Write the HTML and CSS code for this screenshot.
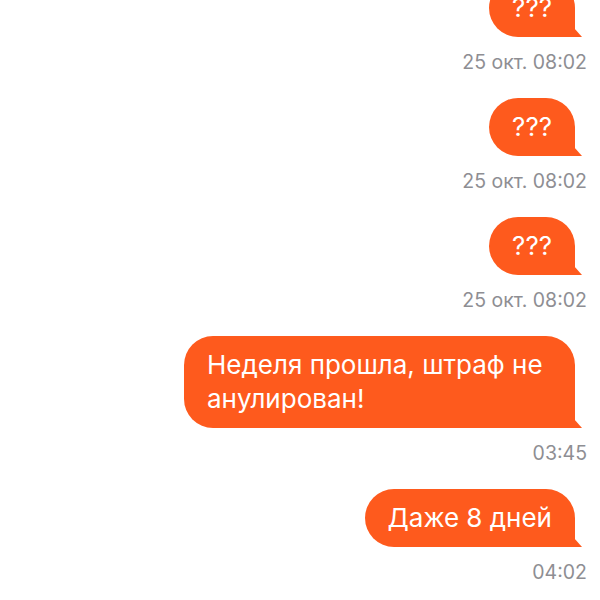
FILE: index.html
```html
<!DOCTYPE html>
<html lang="ru">
<head>
    <meta charset="UTF-8">
    <meta name="viewport" content="width=device-width, initial-scale=1.0">
    <title>Чат</title>
    <link rel="stylesheet" href="styles.css">
</head>
<body>
    <div class="chat">
        <div class="message">
            <div class="bubble">???</div>
            <div class="time">25 окт. 08:02</div>
        </div>
        <div class="message">
            <div class="bubble">???</div>
            <div class="time">25 окт. 08:02</div>
        </div>
        <div class="message">
            <div class="bubble">???</div>
            <div class="time">25 окт. 08:02</div>
        </div>
        <div class="message">
            <div class="bubble">Неделя прошла, штраф не анулирован!</div>
            <div class="time">03:45</div>
        </div>
        <div class="message">
            <div class="bubble">Даже 8 дней</div>
            <div class="time">04:02</div>
        </div>
    </div>
</body>
</html>
```

FILE: styles.css
```css
body {
    margin: 0;
    padding: 0;
    background-color: #fff;
    font-family: 'Inter', 'Roboto', sans-serif;
    overflow: hidden;
}
.chat {
    display: flex;
    flex-direction: column;
    align-items: flex-end;
    margin-top: -21px;
}
.message {
    display: flex;
    flex-direction: column;
    align-items: flex-end;
    width: 100%;
    margin-bottom: 25px;
}
.bubble {
    position: relative;
    max-width: 391px;
    box-sizing: border-box;
    margin-right: 25px;
    padding: 12px 23px 12px 23px;
    background-color: #fe5a1d;
    color: #fff;
    font-size: 26px;
    line-height: 34px;
    border-radius: 29px 29px 0 29px;
}
.bubble::after {
    content: "";
    position: absolute;
    right: -7px;
    bottom: 0;
    width: 8px;
    height: 9px;
    background-color: #fe5a1d;
    clip-path: polygon(0 0, 100% 100%, 0 100%);
}
.time {
    margin-top: 14px;
    margin-right: 13px;
    color: #8e8e93;
    font-size: 19.5px;
    line-height: 22px;
}
```
